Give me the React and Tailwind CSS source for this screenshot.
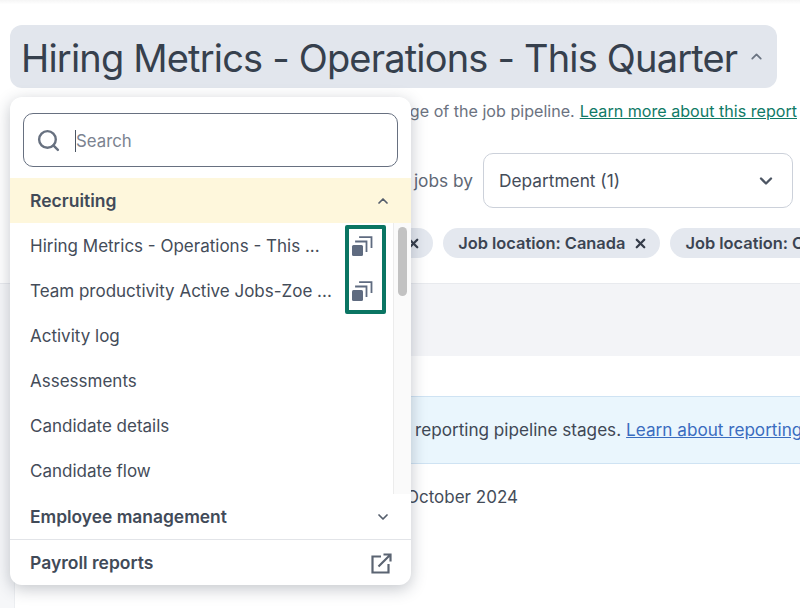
import { ChevronDown, ChevronUp, Search, X } from 'lucide-react'

const reports = [
  { name: 'Hiring Metrics - Operations - This ...', copy: true },
  { name: 'Team productivity Active Jobs-Zoe ...', copy: true },
  { name: 'Activity log' },
  { name: 'Assessments' },
  { name: 'Candidate details' },
  { name: 'Candidate flow' },
]

function CopyIcon() {
  return (
    <svg width="22" height="21" viewBox="0 0 22 21" fill="none" className="shrink-0">
      <rect x="1" y="9" width="11" height="11" rx="1.5" fill="#5f6b80" />
      <path d="M5 6.5V5.5H15.5V16" stroke="#5f6b80" strokeWidth="1.8" />
      <path d="M9 2V1.2H20.5V12" stroke="#5f6b80" strokeWidth="1.8" />
    </svg>
  )
}

function ExternalIcon() {
  return (
    <svg width="21" height="21" viewBox="0 0 21 21" fill="none">
      <path d="M10 3.5H1.5V19.5H17.5V11" stroke="#5b6472" strokeWidth="2.2" />
      <path d="M7.5 13.5L19 2M12.5 1.5H19.5V8.5" stroke="#5b6472" strokeWidth="2.2" />
    </svg>
  )
}

function Chip({ children }) {
  return (
    <div className="flex h-[30px] shrink-0 items-center gap-[8px] rounded-full bg-[#e4e8ef] pl-[15px] pr-[12px] text-[16.4px] font-semibold text-[#3b4452]">
      <span className="whitespace-nowrap">{children}</span>
      <X size={15} strokeWidth={3.6} className="text-[#343c49]" />
    </div>
  )
}

export default function App() {
  return (
    <div className="relative h-[608px] w-[800px] overflow-hidden bg-white font-['Inter',sans-serif] text-[#3b4452]">
      <div className="h-[284px] border-b border-[#e8eaee] bg-gradient-to-b from-[#f5f5f5] from-0% to-white to-[1.5%] pl-[10px] pt-[25px]">
        <div className="flex h-[63px] w-[767px] items-center justify-between rounded-xl bg-[#e2e6ed] pl-[11px] pr-[12px]">
          <h1 className="whitespace-nowrap pt-[2px] text-[38px] font-normal leading-none tracking-[-0.82px] text-[#36404d]">
            Hiring Metrics - Operations - This Quarter
          </h1>
          <ChevronUp size={17} strokeWidth={2.5} className="text-[#6b7482]" />
        </div>
        <p className="mt-[12px] flex justify-end whitespace-nowrap pr-[3px] pt-[1px] text-[16.1px] leading-5 text-[#6b7280]">
          <span>See the percentage of the job pipeline.</span>
          <a href="#" className="ml-[5px] text-[#0f7a66] underline">Learn more about this report</a>
        </p>
        <div className="mt-[32px] flex items-center justify-end gap-[10px] pr-[7px]">
          <span className="text-[17.3px] text-[#5f6875]">jobs by</span>
          <div className="flex h-[55px] w-[310px] items-center justify-between rounded-[10px] border border-[#ccd1da] bg-white pl-[15px] pr-[16px] pt-[1px] text-[17.3px] text-[#444c59]">
            Department (1)
            <ChevronDown size={20} strokeWidth={2.8} className="text-[#4c5563]" />
          </div>
        </div>
        <div className="mt-[20px] flex gap-[10px] pl-[232px]">
          <Chip>Job location: USA</Chip>
          <Chip>Job location: Canada</Chip>
          <Chip>Job location: Canada</Chip>
        </div>
      </div>

      <div className="flex h-[324px]">
        <div className="w-[15px] shrink-0 border-r border-[#eceef1] bg-[#f6f7f9]" />
        <div className="min-w-0 flex-1">
          <div className="h-[72px] bg-[#f3f4f7]" />
          <div className="mt-[40px] flex h-[68px] items-center justify-end overflow-hidden whitespace-nowrap border-y border-[#cfe3f3] bg-[#eaf6fd] text-[17.15px] text-[#3f4855]">
            <div className="flex w-[785px] pl-[400px]">
              <span>reporting pipeline stages.</span>
              <a href="#" className="ml-[5px] text-[#3a6cc0] underline">Learn about reporting pipeline stages</a>
            </div>
          </div>
          <p className="mt-[21px] pl-[391px] text-[17px] leading-6 text-[#444c59]">October 2024</p>
        </div>
      </div>

      <div className="absolute left-[10px] top-[97px] flex h-[488px] w-[401px] flex-col overflow-hidden rounded-xl bg-white shadow-[0_4px_16px_rgba(40,50,70,0.28)]">
        <div className="px-[13px] pb-[11px] pt-[16px]">
          <div className="flex h-[54px] items-center gap-[14px] rounded-[10px] border border-[#677080] pl-[12px] pt-[1px]">
            <Search size={25} strokeWidth={2.3} className="text-[#687180]" />
            <span className="border-l border-[#4b5563] text-[16.8px] leading-[22px] text-[#7b8390]">Search</span>
          </div>
        </div>
        <div className="flex h-[45px] shrink-0 items-center justify-between bg-[#fef7dc] pl-[20px] pr-[20px] pt-[1px] text-[17.5px] font-semibold text-[#414a58]">
          Recruiting
          <ChevronUp size={16} strokeWidth={2.6} className="text-[#555e6c]" />
        </div>
        <div className="flex h-[271px] shrink-0">
          <ul className="min-w-0 flex-1">
            {reports.map(r => (
              <li key={r.name} className="flex h-[45px] items-center justify-between pl-[20px] pr-[20px] pt-[2px] text-[17px] text-[#444c59]">
                <span className="whitespace-nowrap">{r.name}</span>
                {r.copy && <CopyIcon />}
              </li>
            ))}
          </ul>
          <div className="w-[18px] shrink-0 border-l border-[#ececec] bg-[#fafafa] pl-[4px] pt-[4px]">
            <div className="h-[69px] w-[9px] rounded-full bg-[#c2c2c2]" />
          </div>
        </div>
        <div className="flex h-[46px] shrink-0 items-center justify-between border-b border-[#e2e4e8] pl-[20px] pr-[20px] pt-[1px] text-[17.4px] font-semibold text-[#414a58]">
          Employee management
          <ChevronDown size={16} strokeWidth={2.6} className="text-[#555e6c]" />
        </div>
        <div className="flex flex-1 items-center justify-between pl-[20px] pr-[19px] pt-[1px] text-[17.5px] font-semibold text-[#414a58]">
          Payroll reports
          <ExternalIcon />
        </div>
      </div>

      {/* annotation box round the copy icons */}
      <div className="absolute left-[345px] top-[225px] h-[89px] w-[41px] rounded-[2px] border-[4px] border-[#0a7563]" />
    </div>
  )
}
